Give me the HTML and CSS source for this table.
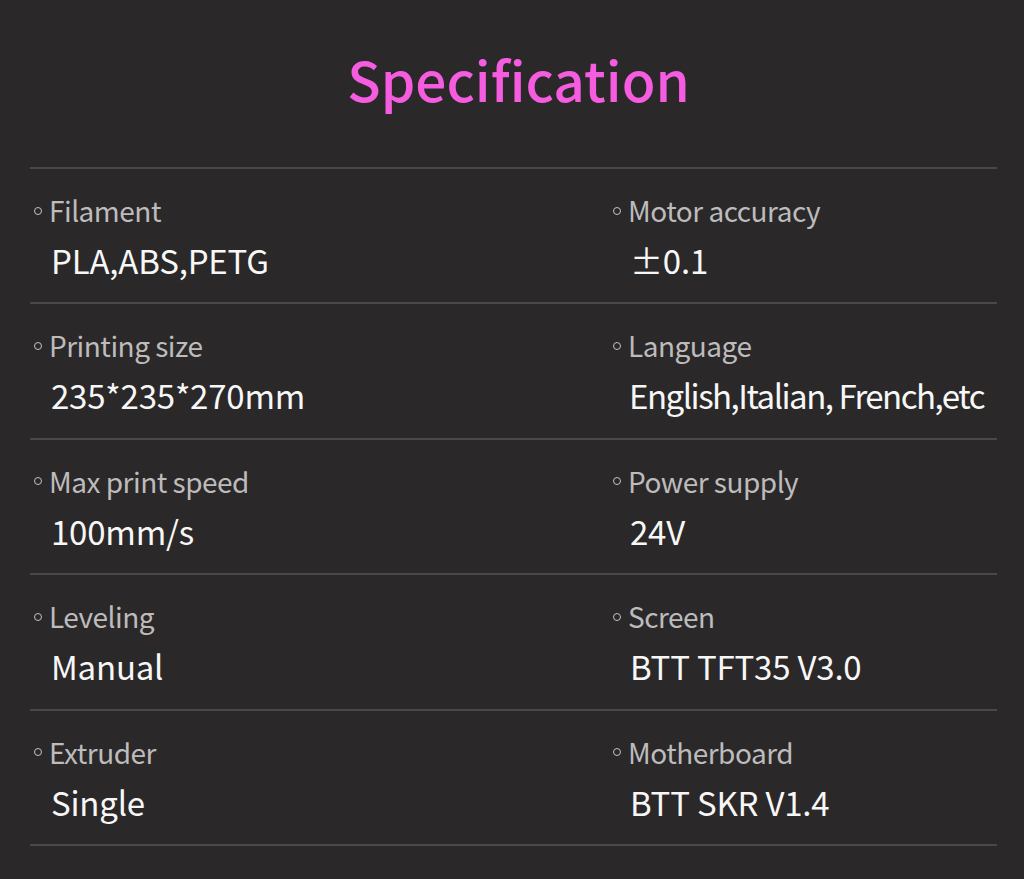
FILE: index.html
```html
<!DOCTYPE html>
<html>
<head>
<meta charset="utf-8">
<link rel="stylesheet" href="styles.css">
</head>
<body>
<div class="page">
  <h1 class="title">Specification</h1>
  <div class="specs">
    <div class="row">
      <div class="cell"><div class="label"><span class="dot"></span>Filament</div><div class="value">PLA,ABS,PETG</div></div>
      <div class="cell"><div class="label"><span class="dot"></span>Motor accuracy</div><div class="value">±0.1</div></div>
    </div>
    <div class="row">
      <div class="cell"><div class="label"><span class="dot"></span>Printing size</div><div class="value">235*235*270mm</div></div>
      <div class="cell"><div class="label"><span class="dot"></span>Language</div><div class="value tight">English,Italian, French,etc</div></div>
    </div>
    <div class="row">
      <div class="cell"><div class="label"><span class="dot"></span>Max print speed</div><div class="value">100mm/s</div></div>
      <div class="cell"><div class="label"><span class="dot"></span>Power supply</div><div class="value">24V</div></div>
    </div>
    <div class="row">
      <div class="cell"><div class="label"><span class="dot"></span>Leveling</div><div class="value">Manual</div></div>
      <div class="cell"><div class="label"><span class="dot"></span>Screen</div><div class="value">BTT TFT35 V3.0</div></div>
    </div>
    <div class="row">
      <div class="cell"><div class="label"><span class="dot"></span>Extruder</div><div class="value">Single</div></div>
      <div class="cell"><div class="label"><span class="dot"></span>Motherboard</div><div class="value">BTT SKR V1.4</div></div>
    </div>
  </div>
</div>
</body>
</html>
```

FILE: styles.css
```css
html, body {
  margin: 0;
  padding: 0;
}
body {
  background: #2a2829;
  font-family: "Noto Sans CJK SC", "Noto Sans", sans-serif;
  width: 1024px;
  height: 879px;
  overflow: hidden;
}
.page {
  padding: 0 27px 0 30px;
}
.title {
  margin: 0;
  height: 167px;
  display: flex;
  align-items: center;
  justify-content: center;
  padding-bottom: 12px;
  padding-left: 10px;
  box-sizing: border-box;
  font-size: 55px;
  font-weight: 500;
  color: #f55ce0;
}
.specs {
  border-top: 2px solid #4a4849;
}
.row {
  display: grid;
  grid-template-columns: 579px 1fr;
  height: 133.4px;
  border-bottom: 2px solid #4a4849;
}
.cell {
  padding: 24px 0 0 4px;
}
.label {
  display: flex;
  align-items: center;
  font-size: 28px;
  line-height: 34px;
  letter-spacing: -0.5px;
  color: #bdbbbc;
}
.dot {
  flex: none;
  width: 6px;
  height: 6px;
  border: 1.6px solid #c4c2c3;
  border-radius: 50%;
  margin-right: 7px;
  margin-top: 1px;
}
.value {
  font-size: 33px;
  line-height: 40px;
  color: #f7f7f7;
  margin-top: 13px;
  padding-left: 17px;
  white-space: nowrap;
  letter-spacing: -0.2px;
}
.value.tight {
  letter-spacing: -1.5px;
  padding-left: 16px;
}
```
